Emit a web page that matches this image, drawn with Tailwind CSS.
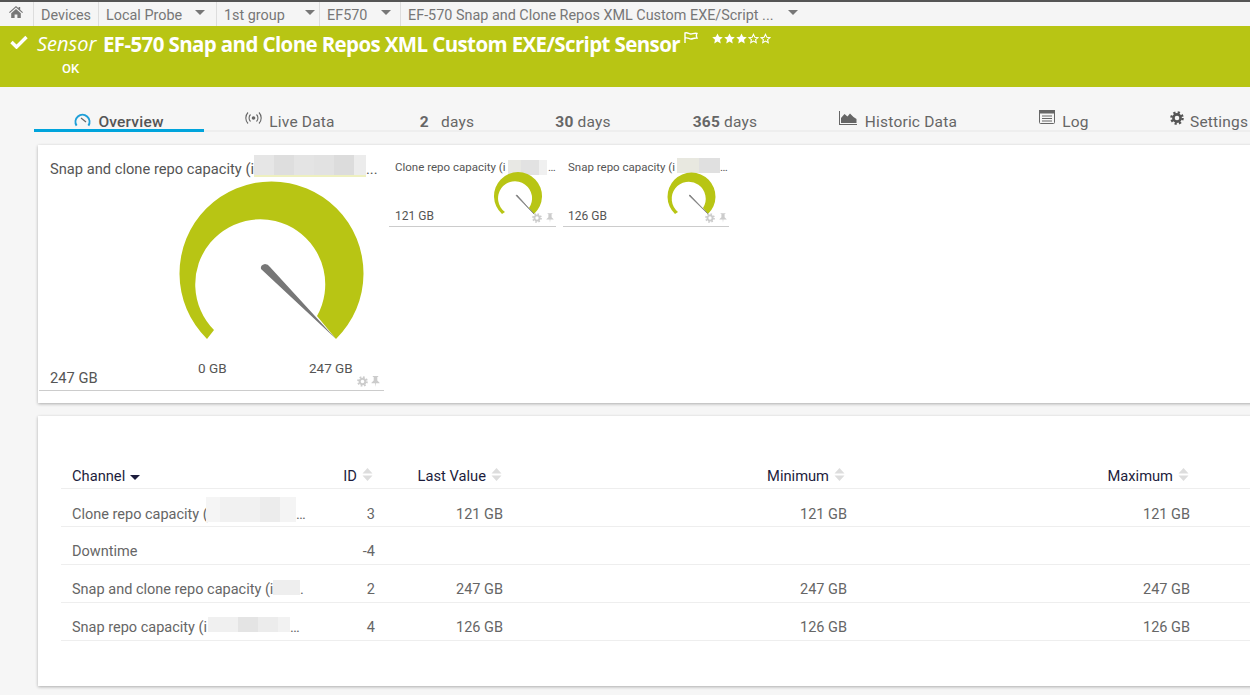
<!DOCTYPE html>
<html>
<head>
<meta charset="utf-8">
<script src="https://cdn.jsdelivr.net/npm/@tailwindcss/browser@4"></script>
</head>
<body class="w-[1250px] h-[695px] overflow-hidden bg-[#f6f6f6] font-['Roboto',sans-serif]">

<!-- Breadcrumb -->
<div class="h-[2px] bg-[#555]"></div>
<div class="h-[24px] bg-[#f5f5f5] flex items-stretch text-[14.4px] leading-[28px] text-[#777] whitespace-nowrap">
    <div class="w-[33px] flex items-center justify-center pb-[4px] pr-[1px]">
        <svg width="14" height="12" viewBox="0 0 14 12" fill="#777"><path d="M7 0 L9.6 2.3 V1 H11.2 V3.7 L14 6.2 L13.2 7 L7 1.6 L.8 7 L0 6.2 Z M2.2 7.2 L7 3 L11.8 7.2 V12 H8.4 V8.5 H5.6 V12 H2.2 Z"/></svg>
    </div>
    <div class="w-[65px] pl-[7px] border-l border-[#ddd]">Devices</div>
    <div class="w-[118px] pl-[7px] border-l border-[#ddd] flex">Local Probe<span class="ml-[13px] mt-[8px] w-0 h-0 border-x-[5px] border-x-transparent border-t-[5px] border-t-[#777]"></span></div>
    <div class="w-[103px] pl-[7px] border-l border-[#ddd] flex">1st group<span class="ml-[20px] mt-[8px] w-0 h-0 border-x-[5px] border-x-transparent border-t-[5px] border-t-[#777]"></span></div>
    <div class="w-[81px] pl-[7px] border-l border-[#ddd] flex">EF570<span class="ml-[14px] mt-[8px] w-0 h-0 border-x-[5px] border-x-transparent border-t-[5px] border-t-[#777]"></span></div>
    <div class="pl-[7px] border-l border-[#ddd] flex">EF-570 Snap and Clone Repos XML Custom EXE/Script ...<span class="ml-[14px] mt-[8px] w-0 h-0 border-x-[5px] border-x-transparent border-t-[5px] border-t-[#777]"></span></div>
</div>

<!-- Sensor header -->
<div class="h-[61px] bg-[#b8c514] text-white pl-[10px] pt-[4px]">
    <div class="flex items-start font-['Open_Sans',sans-serif] whitespace-nowrap">
        <svg class="mt-[5px]" width="18" height="14" viewBox="0 0 18 14"><path d="M1.5 7 L6.5 12 L16.5 2" fill="none" stroke="white" stroke-width="3.4"/></svg>
        <span class="ml-[9px] w-[66px] text-[20px] leading-[28px] italic">Sensor</span>
        <span class="text-[20.5px] leading-[28px] font-bold tracking-[-0.62px]">EF-570 Snap and Clone Repos XML Custom EXE/Script Sensor</span>
        <svg class="ml-[4px] mt-[2px]" width="14" height="11" viewBox="0 0 14 11" fill="none" stroke="white" stroke-width="1.4"><path d="M1 11 V1 C3.5 -.2 5 2.2 7 2 C9 1.8 10.5 .8 13 1.4 C12 3 12 4 13 6 C10 5.6 9 7 7 7 C5 7 3.5 5 1 6.2"/></svg>
        <div class="ml-[14px] mt-[3px] flex gap-[1px]">
            <svg width="11" height="11" viewBox="0 0 24 24" fill="white"><path d="M12 1 L15.4 8.4 L23.5 9.3 L17.5 14.8 L19.1 22.8 L12 18.8 L4.9 22.8 L6.5 14.8 L.5 9.3 L8.6 8.4 Z"/></svg>
            <svg width="11" height="11" viewBox="0 0 24 24" fill="white"><path d="M12 1 L15.4 8.4 L23.5 9.3 L17.5 14.8 L19.1 22.8 L12 18.8 L4.9 22.8 L6.5 14.8 L.5 9.3 L8.6 8.4 Z"/></svg>
            <svg width="11" height="11" viewBox="0 0 24 24" fill="white"><path d="M12 1 L15.4 8.4 L23.5 9.3 L17.5 14.8 L19.1 22.8 L12 18.8 L4.9 22.8 L6.5 14.8 L.5 9.3 L8.6 8.4 Z"/></svg>
            <svg width="11" height="11" viewBox="0 0 24 24" fill="none" stroke="white" stroke-width="2.4"><path d="M12 3 L15 9.5 L21.5 10.2 L16.6 14.6 L18 21 L12 17.6 L6 21 L7.4 14.6 L2.5 10.2 L9 9.5 Z"/></svg>
            <svg width="11" height="11" viewBox="0 0 24 24" fill="none" stroke="white" stroke-width="2.4"><path d="M12 3 L15 9.5 L21.5 10.2 L16.6 14.6 L18 21 L12 17.6 L6 21 L7.4 14.6 L2.5 10.2 L9 9.5 Z"/></svg>
        </div>
    </div>
    <div class="ml-[52px] mt-[3px] text-[13px] leading-[16px] font-medium">OK</div>
</div>

<!-- Tabs -->
<div class="ml-[34px] mt-[23px] w-[1300px] h-[22px] border-b-[2px] border-[#eee] grid grid-cols-[170px_172px_142px_132px_150px_196px_134px_158px] text-[15.5px] leading-[24px] text-[#666] tracking-[0.2px] whitespace-nowrap">
    <div class="h-[22px] border-b-[3px] border-[#00a4dc] flex justify-center gap-[7px] font-medium text-[#555]">
        <svg class="mt-[3px]" width="17" height="14" viewBox="0 0 17 14" fill="none"><path d="M2.6 12.6 A7 7 0 1 1 14.4 12.6" stroke="#1f9fd8" stroke-width="2"/><path d="M7 5 L12 9" stroke="#666" stroke-width="1.2"/></svg>
        <span>Overview</span>
    </div>
    <div class="flex justify-center gap-[7px]">
        <svg class="mt-[1px]" width="17" height="14" viewBox="0 0 17 14" fill="none" stroke="#666" stroke-width="1.1"><path d="M3 1.5 A8 8 0 0 0 3 12.5 M5.5 3.5 A5 5 0 0 0 5.5 10.5 M14 1.5 A8 8 0 0 1 14 12.5 M11.5 3.5 A5 5 0 0 1 11.5 10.5"/><circle cx="8.5" cy="7" r="1.8" fill="#666" stroke="none"/></svg>
        <span>Live Data</span>
    </div>
    <div class="flex justify-center gap-[12px]"><span class="font-bold">2</span><span>days</span></div>
    <div class="flex justify-center gap-[4px] pr-[2px]"><span class="font-bold">30</span><span>days</span></div>
    <div class="flex justify-center gap-[4px]"><span class="font-bold">365</span><span>days</span></div>
    <div class="flex justify-center gap-[8px]">
        <svg class="mt-[1px]" width="18" height="14" viewBox="0 0 18 14" fill="#666"><path d="M0 0 H1 V13 H18 V14 H0 Z"/><path d="M2 12 V7 L5.5 3 L8.5 5.5 L11 2.5 L14.5 6 L17.5 8 V12 Z"/></svg>
        <span>Historic Data</span>
    </div>
    <div class="flex justify-center gap-[7px] pl-[2px]">
        <svg width="16" height="14" viewBox="0 0 16 14" fill="none"><rect x=".5" y=".5" width="15" height="13" rx="1" stroke="#666"/><rect x="0" y="0" width="16" height="3.5" fill="#666"/><path d="M3 6 H13 M3 8.5 H13 M3 11 H13" stroke="#666"/></svg>
        <span>Log</span>
    </div>
    <div class="flex justify-start pl-[40px] gap-[6px]">
        <svg class="mt-[1px]" width="14" height="14" viewBox="0 0 14 14" fill="none" stroke="#555"><circle cx="7" cy="7" r="3.6" stroke-width="2.6"/><circle cx="7" cy="7" r="5.6" stroke-width="2.4" stroke-dasharray="2.2 2.2"/></svg>
        <span>Settings</span>
    </div>
</div>

<!-- Gauges card -->
<div class="ml-[38px] mt-[13px] w-[1300px] h-[258px] bg-white shadow-[0_1px_3px_rgba(0,0,0,0.3)] flex items-start pt-[13px] text-[#555] whitespace-nowrap">
    <div class="relative ml-[1px] w-[345px] h-[233px] border-b border-[#ccc]">
        <div class="pl-[11px] flex text-[14.7px] leading-[22px]">
            <span class="w-[204px] shrink-0">Snap and clone repo capacity (i</span>
            <div class="flex h-[22px] -mt-[3px] border-b-[2px] border-[#eef0c0]">
                <span class="w-[20px] bg-[#e6e6e6]"></span><span class="w-[20px] bg-[#dedede]"></span><span class="w-[20px] bg-[#e4e4e4]"></span><span class="w-[20px] bg-[#e2e2e2]"></span><span class="w-[20px] bg-[#dcdcdc]"></span><span class="w-[12px] bg-[#ececec]"></span>
            </div>
            <span>...</span>
        </div>
        <svg class="absolute left-[0px] top-[0px]" width="345" height="233" viewBox="39 158 345 233">
            <path d="M207 339 A92 92 0 1 1 336 339 L317 316 A65 65 0 1 0 214 330 Z" fill="#b8c514"/>
            <path d="M336 339 L261 269 Q260 265 265 264 Q268 264 270 267 Z" fill="#777"/>
        </svg>
        <div class="absolute left-[159px] top-[201px] text-[13.5px] leading-[18px]">0 GB</div>
        <div class="absolute left-[270px] top-[201px] text-[13.5px] leading-[18px]">247 GB</div>
        <div class="absolute left-[11px] bottom-[2px] text-[14.7px] leading-[20px]">247 GB</div>
        <div class="absolute right-[4px] bottom-[3px] flex gap-[3px] items-center">
            <svg width="11" height="11" viewBox="0 0 14 14" fill="none" stroke="#ccc"><circle cx="7" cy="7" r="3.6" stroke-width="2.6"/><circle cx="7" cy="7" r="5.6" stroke-width="2.4" stroke-dasharray="2.2 2.2"/></svg>
            <svg width="9" height="11" viewBox="0 0 10 12" fill="#ccc"><path d="M2 0 H8 V1 H7 V5 L9.5 7.5 V8 H5.5 L5 12 L4.5 8 H.5 V7.5 L3 5 V1 H2 Z"/></svg>
        </div>
    </div>

    <div class="relative ml-[5px] w-[167px] h-[69px] border-b border-[#ccc]">
        <div class="pl-[6px] flex text-[11.5px] leading-[18px]">
            <span class="w-[113px] shrink-0">Clone repo capacity (i</span>
            <div class="flex h-[15px] mt-[2px]">
                <span class="w-[13px] bg-[#e8e8e4]"></span><span class="w-[18px] bg-[#e2e2e2]"></span><span class="w-[8px] bg-[#f0f0f0]"></span>
            </div>
            <span class="ml-[1px]">…</span>
        </div>
        <svg class="absolute left-[0px] top-[0px]" width="167" height="69" viewBox="389 158 167 69">
            <path d="M502 214 A24 24 0 1 1 534 214 L529 208 A17 17 0 1 0 505 212 Z" fill="#b8c514"/>
            <path d="M534 214 L516 195.5 L517 195 Z" fill="#777" stroke="#777" stroke-width=".6"/>
        </svg>
        <div class="absolute left-[6px] bottom-[1px] text-[12px] leading-[18px]">121 GB</div>
        <div class="absolute right-[2px] bottom-[3px] flex gap-[4px] items-center">
            <svg width="10" height="10" viewBox="0 0 14 14" fill="none" stroke="#ccc"><circle cx="7" cy="7" r="3.6" stroke-width="2.6"/><circle cx="7" cy="7" r="5.6" stroke-width="2.4" stroke-dasharray="2.2 2.2"/></svg>
            <svg width="8" height="10" viewBox="0 0 10 12" fill="#ccc"><path d="M2 0 H8 V1 H7 V5 L9.5 7.5 V8 H5.5 L5 12 L4.5 8 H.5 V7.5 L3 5 V1 H2 Z"/></svg>
        </div>
    </div>

    <div class="relative ml-[7px] w-[166px] h-[69px] border-b border-[#ccc]">
        <div class="pl-[5px] flex text-[11.5px] leading-[18px]">
            <span class="w-[109px] shrink-0">Snap repo capacity (i</span>
            <div class="flex h-[15px]">
                <span class="w-[22px] bg-[#e8e8e0]"></span><span class="w-[21px] bg-[#e0e0e0]"></span>
            </div>
            <span>…</span>
        </div>
        <svg class="absolute left-[0px] top-[0px]" width="166" height="69" viewBox="563 158 166 69">
            <path d="M675 214 A24 24 0 1 1 708 214 L703 208 A17 17 0 1 0 678 212 Z" fill="#b8c514"/>
            <path d="M708 214 L689 195.5 L690 195 Z" fill="#777" stroke="#777" stroke-width=".6"/>
        </svg>
        <div class="absolute left-[5px] bottom-[1px] text-[12px] leading-[18px]">126 GB</div>
        <div class="absolute right-[2px] bottom-[3px] flex gap-[4px] items-center">
            <svg width="10" height="10" viewBox="0 0 14 14" fill="none" stroke="#ccc"><circle cx="7" cy="7" r="3.6" stroke-width="2.6"/><circle cx="7" cy="7" r="5.6" stroke-width="2.4" stroke-dasharray="2.2 2.2"/></svg>
            <svg width="8" height="10" viewBox="0 0 10 12" fill="#ccc"><path d="M2 0 H8 V1 H7 V5 L9.5 7.5 V8 H5.5 L5 12 L4.5 8 H.5 V7.5 L3 5 V1 H2 Z"/></svg>
        </div>
    </div>
</div>

<!-- Channels table -->
<div class="ml-[38px] mt-[13px] w-[1300px] h-[270px] bg-white shadow-[0_1px_3px_rgba(0,0,0,0.3)] pl-[23px] pt-[48px] text-[14.5px] text-[#666] whitespace-nowrap">
    <div class="grid grid-cols-[250px_64px_128px_344px_343px] w-[1216px] h-[25px] border-b border-[#eee] text-[#1c1c3c] text-[14.7px] leading-[24px]">
        <div class="pl-[11px] flex items-center gap-[5px]">Channel<span class="mt-[2px] w-0 h-0 border-x-[5px] border-x-transparent border-t-[5px] border-t-[#1c1c3c]"></span></div>
        <div class="flex justify-end items-center gap-[5px] pr-[2px]">ID<svg class="-mt-[3px]" width="11" height="13" viewBox="0 0 10 13" fill="#ddd"><path d="M5 0 L10 5.5 H0 Z M0 7.5 H10 L5 13 Z"/></svg></div>
        <div class="flex justify-end items-center gap-[5px] pr-[1px]">Last Value<svg class="-mt-[3px]" width="11" height="13" viewBox="0 0 10 13" fill="#ddd"><path d="M5 0 L10 5.5 H0 Z M0 7.5 H10 L5 13 Z"/></svg></div>
        <div class="flex justify-end items-center gap-[5px] pr-[2px]">Minimum<svg class="-mt-[3px]" width="11" height="13" viewBox="0 0 10 13" fill="#ddd"><path d="M5 0 L10 5.5 H0 Z M0 7.5 H10 L5 13 Z"/></svg></div>
        <div class="flex justify-end items-center gap-[5px] pr-[1px]">Maximum<svg class="-mt-[3px]" width="11" height="13" viewBox="0 0 10 13" fill="#ddd"><path d="M5 0 L10 5.5 H0 Z M0 7.5 H10 L5 13 Z"/></svg></div>
    </div>

    <div class="grid grid-cols-[250px_64px_128px_344px_343px] w-[1216px] h-[38px] border-b border-[#eee] pt-[14px] leading-[24px] text-right">
        <div class="pl-[11px] flex text-left"><span class="w-[134px] shrink-0">Clone repo capacity (</span><div class="flex h-[25px] -mt-[6px]"><span class="w-[14px] bg-[#f5f5f5]"></span><span class="w-[40px] bg-[#f1f1f1]"></span><span class="w-[20px] bg-[#ececec]"></span><span class="w-[16px] bg-[#f4f4f4]"></span></div>…</div>
        <div>3</div><div>121 GB</div><div>121 GB</div><div>121 GB</div>
    </div>
    <div class="grid grid-cols-[250px_64px_128px_344px_343px] w-[1216px] h-[38px] border-b border-[#eee] pt-[13px] leading-[24px] text-right">
        <div class="pl-[11px] text-left">Downtime</div>
        <div>-4</div><div></div><div></div><div></div>
    </div>
    <div class="grid grid-cols-[250px_64px_128px_344px_343px] w-[1216px] h-[38px] border-b border-[#eee] pt-[13px] leading-[24px] text-right">
        <div class="pl-[11px] flex text-left"><span class="w-[201px] shrink-0">Snap and clone repo capacity (i</span><div class="flex h-[15px] mt-[2px]"><span class="w-[27px] bg-[#eeeeee]"></span></div>.</div>
        <div>2</div><div>247 GB</div><div>247 GB</div><div>247 GB</div>
    </div>
    <div class="grid grid-cols-[250px_64px_128px_344px_343px] w-[1216px] h-[38px] border-b border-[#eee] pt-[13px] leading-[24px] text-right">
        <div class="pl-[11px] flex text-left"><span class="w-[136px] shrink-0">Snap repo capacity (i</span><div class="flex h-[15px] mt-[1px]"><span class="w-[30px] bg-[#f0f0f0]"></span><span class="w-[20px] bg-[#e4e4e4]"></span><span class="w-[20px] bg-[#ececec]"></span><span class="w-[12px] bg-[#f2f2f2]"></span></div>…</div>
        <div>4</div><div>126 GB</div><div>126 GB</div><div>126 GB</div>
    </div>
</div>
</body>
</html>
